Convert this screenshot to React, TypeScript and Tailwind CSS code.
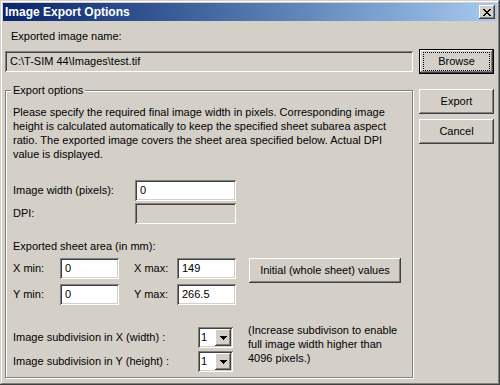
import type { ReactNode } from "react";

const raised =
  "bg-[#d4d0c8] shadow-[inset_-1px_-1px_#404040,inset_1px_1px_#ffffff,inset_-2px_-2px_#808080,inset_2px_2px_#d4d0c8]";
const sunken =
  "shadow-[inset_1px_1px_#808080,inset_-1px_-1px_#ffffff,inset_2px_2px_#404040,inset_-2px_-2px_#d4d0c8]";

function Field({ value, width, disabled }: { value?: string; width: string; disabled?: boolean }) {
  return (
    <div
      className={`${width} h-[21px] flex items-center pl-[5px] whitespace-nowrap ${sunken} ${
        disabled ? "bg-[#d4d0c8]" : "bg-white"
      }`}
    >
      {value}
    </div>
  );
}

function Button({ children, className = "" }: { children: ReactNode; className?: string }) {
  return (
    <div className={`h-[25px] flex items-center justify-center ${raised} ${className}`}>{children}</div>
  );
}

function Combo() {
  return (
    <div className={`w-[35px] h-[21px] bg-white flex items-center p-[2px] ${sunken}`}>
      <span className="flex-1 pl-[1px]">1</span>
      <div className={`w-[16px] h-[17px] flex items-center justify-center ${raised}`}>
        <svg width="7" height="4" viewBox="0 0 7 4" shapeRendering="crispEdges">
          <path d="M0 0h7v1H0z M1 1h5v1H1z M2 2h3v1H2z M3 3h1v1H3z" fill="#000" />
        </svg>
      </div>
    </div>
  );
}

export default function App() {
  return (
    <div className="w-[500px] h-[385px] bg-[#d4d0c8] p-[3px] flex flex-col text-[11px] leading-[13px] text-black font-['Liberation_Sans',Arial,sans-serif] shadow-[inset_-1px_-1px_#404040,inset_1px_1px_#d4d0c8,inset_-2px_-2px_#808080,inset_2px_2px_#ffffff]">
      {/* title bar */}
      <div className="h-[18px] flex items-center justify-between pl-[2px] pr-[2px] bg-linear-to-r from-[#0a246a] to-[#a6caf0]">
        <span className="text-white font-bold text-[12px] leading-[14px]">Image Export Options</span>
        <div className={`w-[16px] h-[14px] flex items-center justify-center ${raised}`}>
          <svg width="8" height="7" viewBox="0 0 8 7" shapeRendering="crispEdges">
            <path
              d="M0 0h2v1H0z M6 0h2v1H6z M1 1h2v1H1z M5 1h2v1H5z M2 2h4v1H2z M3 3h2v1H3z M2 4h4v1H2z M1 5h2v1H1z M5 5h2v1H5z M0 6h2v1H0z M6 6h2v1H6z"
              fill="#000"
            />
          </svg>
        </div>
      </div>

      <div className="flex-1 flex flex-col px-[2px]">
        <div className="mt-[9px] pl-[6px]">Exported image name:</div>

        <div className="mt-[6px] flex items-center gap-[6px]">
          <Field value={"C:\\T-SIM 44\\Images\\test.tif"} width="w-[408px]" disabled />
          <div className="w-[75px] h-[25px] border border-black px-[3px] py-[2px] shadow-[inset_-1px_-1px_#404040,inset_1px_1px_#ffffff,inset_-2px_-2px_#808080,inset_2px_2px_#d4d0c8]">
            <div className="w-full h-full border border-dotted border-black flex items-center justify-center">
              Browse
            </div>
          </div>
        </div>

        <div className="mt-[10px] flex gap-[6px]">
          <fieldset className="w-[408px] h-[294px] border border-[#808080] shadow-[1px_1px_#ffffff,inset_1px_1px_#ffffff]">
            <legend className="ml-[5px] px-[2px] bg-[#d4d0c8] leading-[13px]">Export options</legend>
            <div className="pl-[7px] pt-[8px]">
              <p className="leading-[14px]">
                Please specify the required final image width in pixels. Corresponding image
                <br />
                height is calculated automatically to keep the specified sheet subarea aspect
                <br />
                ratio. The exported image covers the sheet area specified below. Actual DPI
                <br />
                value is displayed.
              </p>

              <div className="mt-[19px] flex flex-col gap-[2px]">
                <div className="flex items-center">
                  <span className="w-[122px]">Image width (pixels):</span>
                  <Field value="0" width="w-[101px]" />
                </div>
                <div className="flex items-center">
                  <span className="w-[122px]">DPI:</span>
                  <Field width="w-[101px]" disabled />
                </div>
              </div>

              <div className="mt-[16px]">Exported sheet area (in mm):</div>

              <div className="mt-[5px] flex items-start">
                <div className="flex flex-col gap-[5px]">
                  <div className="flex items-center">
                    <span className="w-[47px]">X min:</span>
                    <Field value="0" width="w-[59px]" />
                    <span className="w-[43px] ml-[15px]">X max:</span>
                    <Field value="149" width="w-[59px]" />
                  </div>
                  <div className="flex items-center">
                    <span className="w-[47px]">Y min:</span>
                    <Field value="0" width="w-[59px]" />
                    <span className="w-[43px] ml-[15px]">Y max:</span>
                    <Field value="266.5" width="w-[59px]" />
                  </div>
                </div>
                <Button className="ml-[13px] w-[152px]">Initial (whole sheet) values</Button>
              </div>

              <div className="mt-[18px] flex items-start">
                <div className="pt-[4px] flex flex-col gap-[3px]">
                  <div className="flex items-center">
                    <span className="w-[185px]">Image subdivision in X (width) :</span>
                    <Combo />
                  </div>
                  <div className="flex items-center">
                    <span className="w-[185px]">Image subdivision in Y (height) :</span>
                    <Combo />
                  </div>
                </div>
                <p className="ml-[15px] leading-[14px]">
                  (Increase subdivison to enable
                  <br />
                  full image width higher than
                  <br />
                  4096 pixels.)
                </p>
              </div>
            </div>
          </fieldset>

          <div className="w-[75px] pt-[5px] flex flex-col gap-[5px]">
            <Button>Export</Button>
            <Button>Cancel</Button>
          </div>
        </div>
      </div>
    </div>
  );
}
